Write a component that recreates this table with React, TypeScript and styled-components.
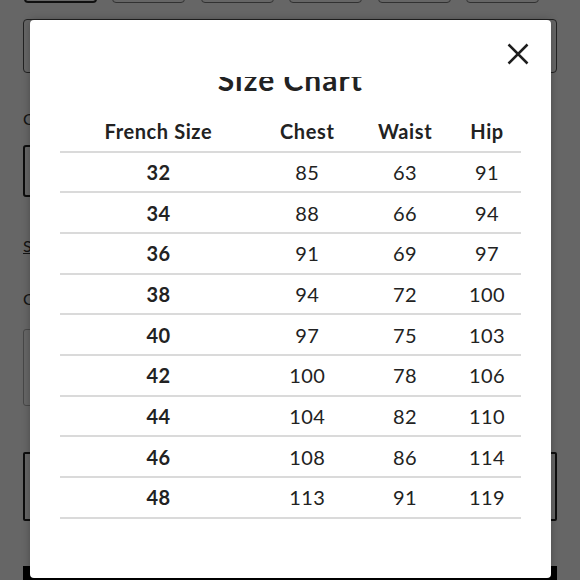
import React, { useLayoutEffect, useRef } from "react";
import styled, { createGlobalStyle } from "styled-components";

const GlobalStyle = createGlobalStyle`
  html, body {
    margin: 0;
    padding: 0;
    width: 580px;
    height: 580px;
    overflow: hidden;
    background: #ffffff;
  }
  body {
    font-family: Lato, "Noto Sans", sans-serif;
    color: #222222;
  }
  * { box-sizing: border-box; }
`;

const Viewport = styled.div`
  position: relative;
  width: 580px;
  height: 580px;
  overflow: hidden;
`;

/* ---------- page behind the dialog ---------- */
const Page = styled.div`
  height: 580px;
  overflow: hidden;
`;

const PageContent = styled.div`
  display: flex;
  flex-direction: column;
  padding: 0 23px 40px 23px;
`;

const SizeRow = styled.div`
  display: flex;
  gap: 15.4px;
  padding-left: 1px;
`;

const SizeButton = styled.button<{ $active?: boolean }>`
  width: 73px;
  height: 41px;
  border-radius: 4px;
  background: #ffffff;
  border: ${(p) => (p.$active ? "2px solid #2a2a2a" : "1px solid #7a7a7a")};
`;

const SelectBox = styled.div`
  margin-top: 16px;
  height: 54px;
  border: 1.5px solid #555;
  border-radius: 4px;
  display: flex;
  align-items: center;
  padding: 0 16px;
  font-size: 16px;
  color: #333;
`;

const Label = styled.div<{ $gap: number }>`
  margin-top: ${(p) => p.$gap}px;
  font-size: 16px;
  line-height: 20px;
  color: #333;
`;

const LinkText = styled.a`
  margin-top: 39px;
  font-size: 16px;
  line-height: 20px;
  color: #333;
  text-decoration: underline;
`;

const Swatch = styled.div`
  margin-top: 16px;
  width: 80px;
  height: 52px;
  border: 2px solid #222;
  border-radius: 3px;
`;

const TextArea = styled.div`
  margin-top: 20px;
  width: 120px;
  height: 77px;
  border: 1px solid #b4b4b4;
  border-radius: 3px;
`;

const OutlineButton = styled.button`
  margin-top: 46px;
  height: 69px;
  border: 2px solid #222;
  border-radius: 2px;
  background: #fff;
`;

const SolidButton = styled.button`
  margin-top: 45px;
  height: 50px;
  border: none;
  background: #000;
`;

/* ---------- dialog ---------- */
const Overlay = styled.div`
  position: absolute;
  inset: 0;
  background: rgba(0, 0, 0, 0.6);
  display: flex;
  padding: 20px 29px 2px 29.5px;
`;

const Modal = styled.div`
  flex: 1;
  background: #ffffff;
  border-radius: 4px;
  box-shadow: 0 0 9px rgba(0, 0, 0, 0.28);
  display: flex;
  flex-direction: column;
  overflow: hidden;
`;

const ModalHeader = styled.div`
  height: 57px;
  flex: none;
  display: flex;
  justify-content: flex-end;
  align-items: flex-start;
  padding: 23px 22px 0 0;
`;

const CloseButton = styled.button`
  width: 22px;
  height: 22px;
  padding: 0;
  border: none;
  background: none;
  display: flex;
  cursor: pointer;
`;

const ModalBody = styled.div`
  flex: 1;
  min-height: 0;
  overflow: hidden;
  padding: 16px 30px 120px 30px;
`;

const Title = styled.h2`
  margin: 0 0 15px 0;
  text-align: center;
  font-family: Lato, sans-serif;
  font-weight: 700;
  font-size: 30px;
  line-height: 36px;
  letter-spacing: 1px;
  color: #222;
`;

const Chart = styled.div`
  display: flex;
  flex-direction: column;
`;

const ChartRow = styled.div`
  display: grid;
  grid-template-columns: 198fr 100fr 96fr 68fr;
  height: 40.67px;
  flex: none;
  align-items: center;
  border-bottom: 2px solid #dadada;
`;

const Cell = styled.div<{ $bold?: boolean; $head?: boolean }>`
  text-align: center;
  font-family: Lato, sans-serif;
  font-size: 20px;
  line-height: 24px;
  font-weight: ${(p) => (p.$bold ? 700 : 400)};
  letter-spacing: ${(p) => (p.$head ? "0.6px" : "0.4px")};
  color: #222;
`;

const sizes = ["32", "34", "36", "38", "40", "42"];

const rows: [string, string, string, string][] = [
  ["32", "85", "63", "91"],
  ["34", "88", "66", "94"],
  ["36", "91", "69", "97"],
  ["38", "94", "72", "100"],
  ["40", "97", "75", "103"],
  ["42", "100", "78", "106"],
  ["44", "104", "82", "110"],
  ["46", "108", "86", "114"],
  ["48", "113", "91", "119"],
];

export default function App() {
  const pageRef = useRef<HTMLDivElement>(null);
  const bodyRef = useRef<HTMLDivElement>(null);

  useLayoutEffect(() => {
    if (pageRef.current) pageRef.current.scrollTop = 38;
    if (bodyRef.current) bodyRef.current.scrollTop = 32;
  }, []);

  return (
    <Viewport>
      <GlobalStyle />
      <Page ref={pageRef}>
        <PageContent>
          <SizeRow>
            {sizes.map((s, i) => (
              <SizeButton key={s} $active={i === 0} aria-label={`Size ${s}`} />
            ))}
          </SizeRow>
          <SelectBox>Select a size</SelectBox>
          <Label $gap={36}>Colour</Label>
          <Swatch />
          <LinkText>Size Chart</LinkText>
          <Label $gap={33}>Comments</Label>
          <TextArea />
          <OutlineButton aria-label="Add to wishlist" />
          <SolidButton aria-label="Add to bag" />
        </PageContent>
      </Page>
      <Overlay>
        <Modal role="dialog" aria-label="Size Chart">
          <ModalHeader>
            <CloseButton aria-label="Close">
              <svg width="22" height="22" viewBox="0 0 22 22">
                <path
                  d="M1.5 1.5 L20.5 20.5 M20.5 1.5 L1.5 20.5"
                  stroke="#1e1e1e"
                  strokeWidth="2.5"
                  fill="none"
                />
              </svg>
            </CloseButton>
          </ModalHeader>
          <ModalBody ref={bodyRef}>
            <Title>Size Chart</Title>
            <Chart>
              <ChartRow>
                <Cell $bold $head>French Size</Cell>
                <Cell $bold $head>Chest</Cell>
                <Cell $bold $head>Waist</Cell>
                <Cell $bold $head>Hip</Cell>
              </ChartRow>
              {rows.map((r) => (
                <ChartRow key={r[0]}>
                  <Cell $bold>{r[0]}</Cell>
                  <Cell>{r[1]}</Cell>
                  <Cell>{r[2]}</Cell>
                  <Cell>{r[3]}</Cell>
                </ChartRow>
              ))}
            </Chart>
          </ModalBody>
        </Modal>
      </Overlay>
    </Viewport>
  );
}
